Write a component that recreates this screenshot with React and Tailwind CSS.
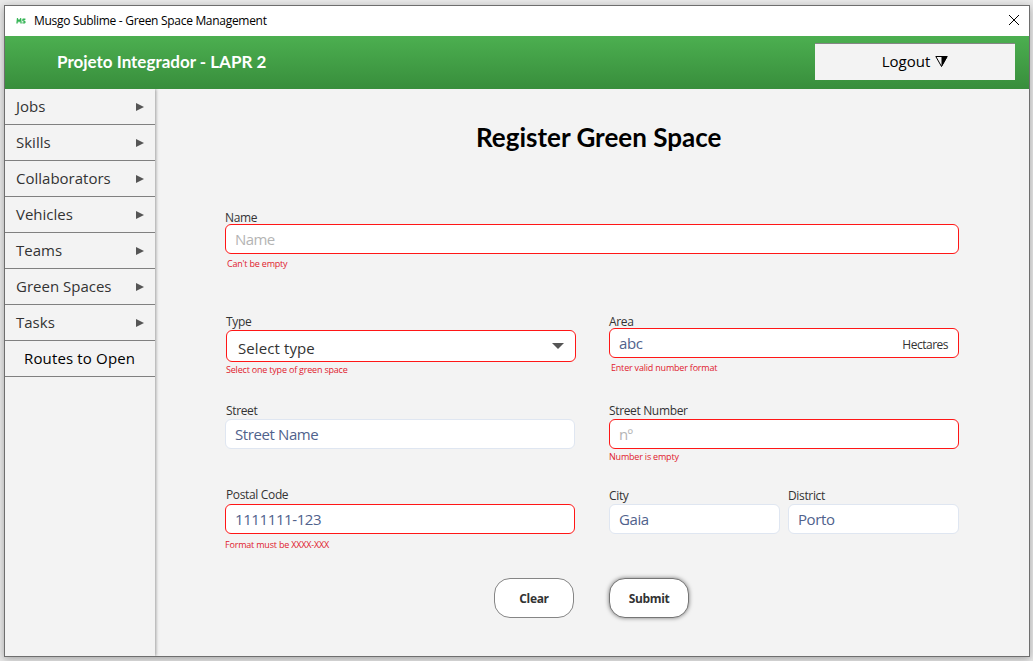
import React from "react";

const MENU = ["Jobs", "Skills", "Collaborators", "Vehicles", "Teams", "Green Spaces", "Tasks"];

function Field({ label, labelBox, box, error, errorBox = "", className, children }) {
  return (
    <div className={`flex flex-col ${className}`}>
      <div className={`shrink-0 whitespace-nowrap text-[12px] leading-[18px] tracking-[-0.35px] text-[#333] ${labelBox}`}>{label}</div>
      <div className={`flex shrink-0 items-center rounded-[6px] border bg-white ${box}`}>{children}</div>
      {error && (
        <div className={`whitespace-nowrap text-[9px] leading-[12px] tracking-[-0.2px] text-[#e0192d] ${errorBox}`}>{error}</div>
      )}
    </div>
  );
}

const RED = "h-[30px] border-[#ff1616] pl-[9px]";
const PLAIN = "h-[30px] border-[#dfe6f1] pl-[9px]";
const VALUE = "text-[15px] leading-[20px] tracking-[-0.4px] whitespace-nowrap text-[#50628c]";
const HINT = "text-[15px] leading-[20px] tracking-[-0.6px] whitespace-nowrap text-[#b4b4b4]";

export default function App() {
  return (
    <div className="h-[661px] w-[1033px] overflow-hidden bg-[#e9e9e9] pt-[5px] pl-[4px] font-['Open_Sans','Noto_Sans',sans-serif]">
      <div className="flex h-[652px] w-[1026px] flex-col border border-[#6e6e6e] bg-[#f3f3f3] shadow-[0_2px_8px_rgba(0,0,0,0.3)]">
        <div className="flex h-[30px] shrink-0 items-center bg-white pr-[10px] pl-[11px]">
          <svg width="10" height="6" viewBox="0 0 10 6" fill="none" stroke="#35b455" strokeWidth="1.4">
            <path d="M1 5.5 1.5 1 3 3.5 4.6 1 5.1 5.5M9.4 1.2H7.2Q6.4 2.2 7.4 2.9L8.6 3.4Q9.4 4.3 8.4 4.9H6.4" />
          </svg>
          <div className="ml-[8px] text-[12px] leading-[16px] tracking-[-0.3px] whitespace-nowrap text-black">Musgo Sublime - Green Space Management</div>
          <svg className="mb-[2px] ml-auto" width="10" height="10" viewBox="0 0 10 10" stroke="#000" strokeWidth="1">
            <path d="M0 0 10 10M10 0 0 10" />
          </svg>
        </div>
        <div className="flex h-[53px] shrink-0 items-start justify-between bg-linear-to-b from-[#4caf50] to-[#388e3c] pt-[7px] pr-[14px] pl-[52px]">
          <div className="mt-[7px] font-[Lato] text-[17px] leading-[24px] font-bold whitespace-nowrap text-white">
            Projeto Integrador - LAPR 2
          </div>
          <div className="flex h-[37px] w-[200px] items-center justify-center gap-[5px] border-t border-[#858585] bg-[#f3f3f3] pb-[2px] text-[15px] text-black">
            <span>Logout</span>
            <svg width="13" height="11" viewBox="0 0 13 11">
              <path d="M.8.5H12.2L6.5 10.5Z" fill="none" stroke="#000" />
              <path d="M6.5 .5H12.5L6.5 11Z" fill="#000" />
            </svg>
          </div>
        </div>
        <div className="flex min-h-0 flex-1">
          <nav className="w-[150px] shrink-0 shadow-[1px_0_3px_rgba(0,0,0,0.35)] [clip-path:inset(0_-6px_0_0)]">
            {MENU.map((m) => (
              <div key={m} className="flex h-[36px] items-center justify-between border-b border-[#808080] pr-[11px] pl-[11px] text-[15px] text-[#333]">
                <span>{m}</span>
                <svg width="8" height="8" viewBox="0 0 8 8" fill="#555">
                  <path d="M0 0 8 4 0 8Z" />
                </svg>
              </div>
            ))}
            <div className="flex h-[36px] items-center border-b border-[#808080] pl-[19px] text-[15px] tracking-[0.15px] whitespace-nowrap text-black">Routes to Open</div>
          </nav>
          <main className="flex flex-1 flex-col pl-[70px]">
            <div className="h-[120px] shrink-0 pt-[32px] pl-[251px] font-[Lato] text-[26px] leading-[32px] font-bold whitespace-nowrap text-black">
              Register Green Space
            </div>
            <div className="flex h-[104px] shrink-0">
              <Field className="w-[734px]" label="Name" labelBox="h-[15px]" box={RED} error="Can't be empty" errorBox="mt-[4px] pl-[2px]">
                <span className={HINT}>Name</span>
              </Field>
            </div>
            <div className="flex h-[89px] shrink-0">
              <Field className="ml-[1px] w-[350px]" label="Type" labelBox="h-[17px]" box="h-[32px] border-[#ff1616] pl-[11px] pr-[11px]" error="Select one type of green space" errorBox="mt-[2px]">
                <span className="mt-[4px] text-[15px] leading-[20px] tracking-[0.1px] text-[#333]">Select type</span>
                <svg className="ml-auto" width="12" height="6" viewBox="0 0 12 6" fill="#555">
                  <path d="M0 0H12L6 6Z" />
                </svg>
              </Field>
              <Field className="ml-[33px] w-[350px]" label="Area" labelBox="h-[15px]" box={RED} error="Enter valid number format" errorBox="mt-[4px] pl-[2px]">
                <span className={VALUE}>abc</span>
                <span className="mt-[4px] mr-[10px] ml-auto text-[12px] leading-[16px] tracking-[-0.5px] text-[#333]">Hectares</span>
              </Field>
            </div>
            <div className="flex h-[84px] shrink-0">
              <Field className="w-[350px]" label="Street" labelBox="h-[17px] pl-[1px]" box={PLAIN}>
                <span className={VALUE}>Street Name</span>
              </Field>
              <Field className="ml-[34px] w-[350px]" label="Street Number" labelBox="h-[17px]" box={RED} error="Number is empty" errorBox="mt-[2px]">
                <span className={HINT}>nº</span>
              </Field>
            </div>
            <div className="flex h-[92px] shrink-0">
              <Field className="w-[350px]" label="Postal Code" labelBox="h-[18px] pl-[1px]" box={RED} error="Format must be XXXX-XXX" errorBox="mt-[5px]">
                <span className={VALUE}>1111111-123</span>
              </Field>
              <Field className="ml-[34px] w-[171px] pt-[1px]" label="City" labelBox="h-[17px]" box={PLAIN}>
                <span className={VALUE}>Gaia</span>
              </Field>
              <Field className="ml-[8px] w-[171px] pt-[1px]" label="District" labelBox="h-[17px]" box={PLAIN}>
                <span className={VALUE}>Porto</span>
              </Field>
            </div>
            <div className="flex gap-[35px] pl-[269px] text-[12px] font-bold tracking-[-0.35px] text-[#333]">
              <button className="h-[40px] w-[80px] rounded-[16px] border border-[#858585] bg-white pt-[2px]">Clear</button>
              <button className="h-[40px] w-[80px] rounded-[16px] border border-[#757575] bg-white pt-[2px] shadow-[0_0_4px_rgba(0,0,0,0.5)]">Submit</button>
            </div>
          </main>
        </div>
      </div>
    </div>
  );
}
